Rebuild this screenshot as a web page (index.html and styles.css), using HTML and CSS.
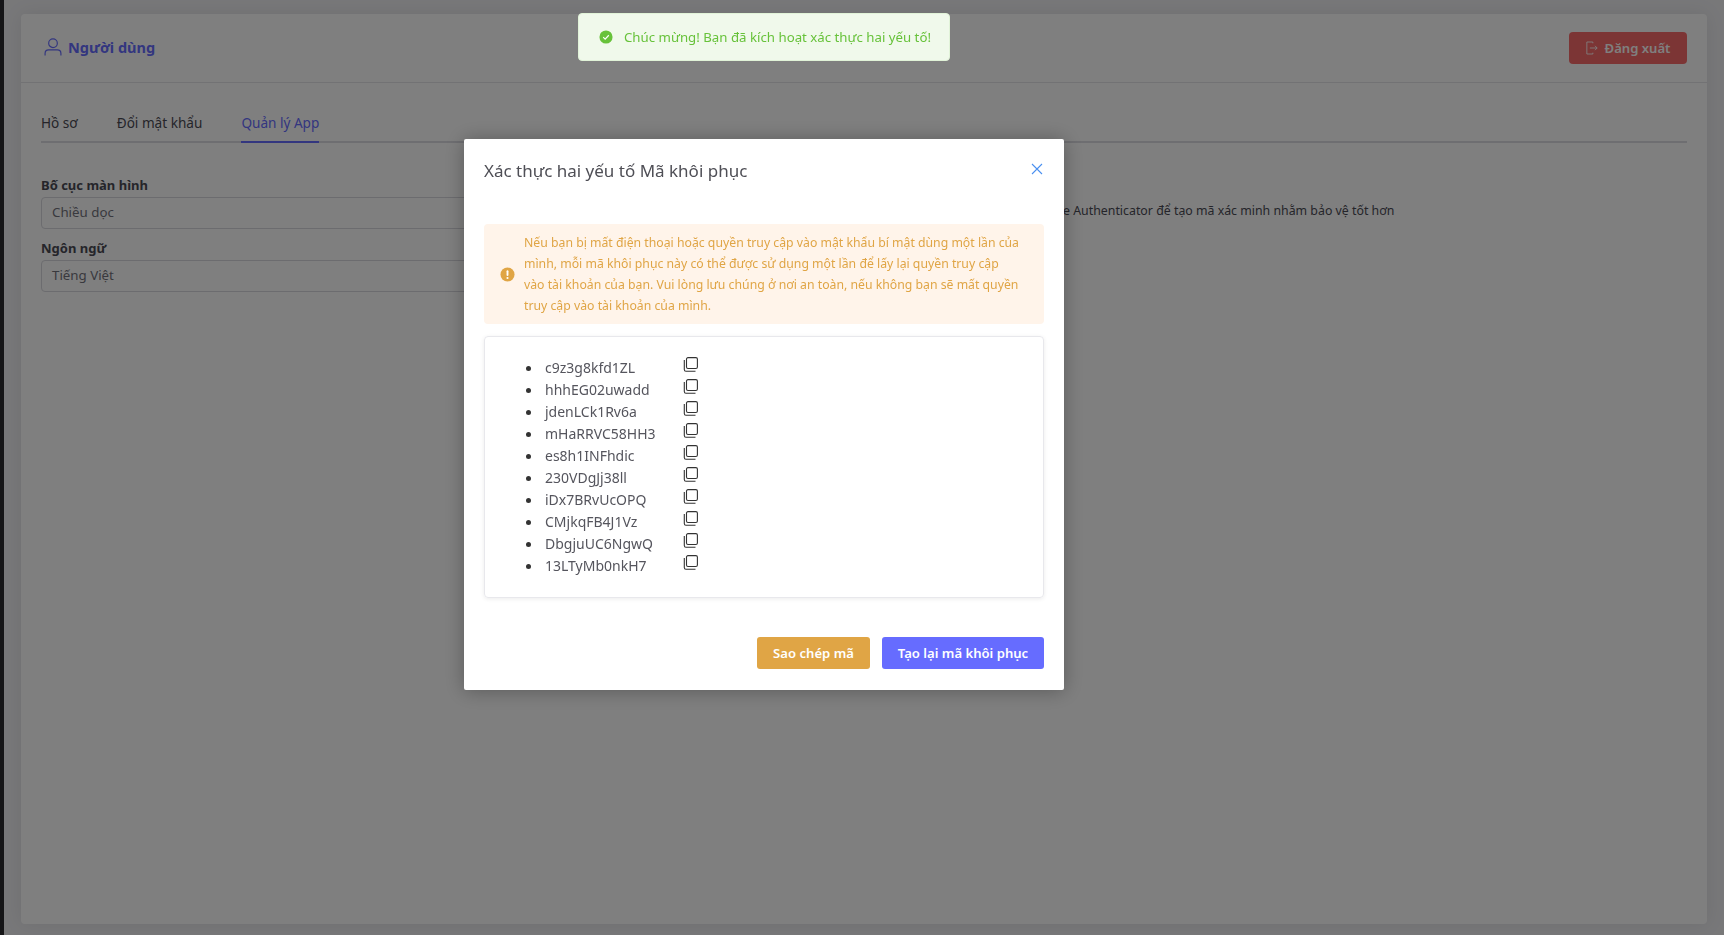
FILE: index.html
```html
<!DOCTYPE html>
<html>
    <head>
        <title>Người dùng</title>
        <link rel="stylesheet" href="styles.css">
    </head>
    <body class="body">
        <div class="rail"></div>
        <div class="page">
            <div class="card">
                <div class="card-head">
                    <div class="head-title">
                        <svg class="user-icon" viewBox="0 0 20 20" fill="none" stroke="currentColor" stroke-width="1.300"><circle cx="10" cy="5.800" r="4.800"/><path d="M1.200 19.500v-2.300c0-2.400 1.700-4 4-4h9.600c2.300 0 4 1.600 4 4v2.300"/></svg>
                        <span>Người dùng</span>
                    </div>
                    <button class="logout">
                        <svg class="logout-icon" viewBox="0 0 14 16" fill="none" stroke="currentColor" stroke-width="1"><path d="M8 2.500V1H1v14h7v-1.500"/><path d="M4.500 8h8.500M10.500 5.500L13 8l-2.500 2.500"/></svg>
                        Đăng xuất
                    </button>
                </div>
                <div class="card-body">
                    <div class="tabs">
                        <div class="tab">Hồ sơ</div>
                        <div class="tab">Đổi mật khẩu</div>
                        <div class="tab active">Quản lý App</div>
                    </div>
                    <div class="cols">
                        <div class="form">
                            <label class="label">Bố cục màn hình</label>
                            <div class="input">Chiều dọc</div>
                            <label class="label">Ngôn ngữ</label>
                            <div class="input">Tiếng Việt</div>
                        </div>
                        <div class="side">Sử dụng ứng dụng Google Authenticator để tạo mã xác minh nhằm bảo vệ tốt hơn</div>
                    </div>
                </div>
            </div>
        </div>

        <div class="overlay">
            <div class="modal">
                <div class="modal-head">
                    <span class="modal-title">Xác thực hai yếu tố Mã khôi phục</span>
                    <svg class="close" viewBox="0 0 12 12" fill="none" stroke="currentColor" stroke-width="1.100"><path d="M1 1l10 10M11 1L1 11"/></svg>
                </div>
                <div class="alert">
                    <svg class="alert-icon" viewBox="0 0 16 16"><circle cx="8" cy="8" r="7.500" fill="#e0a545"/><rect x="7" y="3.500" width="2" height="6" rx="1" fill="#fff"/><circle cx="8" cy="11.700" r="1.150" fill="#fff"/></svg>
                    <p class="alert-text">Nếu bạn bị mất điện thoại hoặc quyền truy cập vào mật khẩu bí mật dùng một lần của mình, mỗi mã khôi phục này có thể được sử dụng một lần để lấy lại quyền truy cập vào tài khoản của bạn. Vui lòng lưu chúng ở nơi an toàn, nếu không bạn sẽ mất quyền truy cập vào tài khoản của mình.</p>
                </div>
                <div class="codes">
                    <ul class="code-list">
                        <li class="code"><span class="code-text">c9z3g8kfd1ZL</span><svg class="copy" viewBox="0 0 15 15" fill="none" stroke="currentColor" stroke-width="1.100"><rect x="3.500" y="0.600" width="10.900" height="10.900" rx="1.500"/><path d="M1.300 3v9.500c0 1 .7 1.800 1.700 1.800h9.500"/></svg></li>
                        <li class="code"><span class="code-text">hhhEG02uwadd</span><svg class="copy" viewBox="0 0 15 15" fill="none" stroke="currentColor" stroke-width="1.100"><rect x="3.500" y="0.600" width="10.900" height="10.900" rx="1.500"/><path d="M1.300 3v9.500c0 1 .7 1.800 1.700 1.800h9.500"/></svg></li>
                        <li class="code"><span class="code-text">jdenLCk1Rv6a</span><svg class="copy" viewBox="0 0 15 15" fill="none" stroke="currentColor" stroke-width="1.100"><rect x="3.500" y="0.600" width="10.900" height="10.900" rx="1.500"/><path d="M1.300 3v9.500c0 1 .7 1.800 1.700 1.800h9.500"/></svg></li>
                        <li class="code"><span class="code-text">mHaRRVC58HH3</span><svg class="copy" viewBox="0 0 15 15" fill="none" stroke="currentColor" stroke-width="1.100"><rect x="3.500" y="0.600" width="10.900" height="10.900" rx="1.500"/><path d="M1.300 3v9.500c0 1 .7 1.800 1.700 1.800h9.500"/></svg></li>
                        <li class="code"><span class="code-text">es8h1INFhdic</span><svg class="copy" viewBox="0 0 15 15" fill="none" stroke="currentColor" stroke-width="1.100"><rect x="3.500" y="0.600" width="10.900" height="10.900" rx="1.500"/><path d="M1.300 3v9.500c0 1 .7 1.800 1.700 1.800h9.500"/></svg></li>
                        <li class="code"><span class="code-text">230VDgJj38ll</span><svg class="copy" viewBox="0 0 15 15" fill="none" stroke="currentColor" stroke-width="1.100"><rect x="3.500" y="0.600" width="10.900" height="10.900" rx="1.500"/><path d="M1.300 3v9.500c0 1 .7 1.800 1.700 1.800h9.500"/></svg></li>
                        <li class="code"><span class="code-text">iDx7BRvUcOPQ</span><svg class="copy" viewBox="0 0 15 15" fill="none" stroke="currentColor" stroke-width="1.100"><rect x="3.500" y="0.600" width="10.900" height="10.900" rx="1.500"/><path d="M1.300 3v9.500c0 1 .7 1.800 1.700 1.800h9.500"/></svg></li>
                        <li class="code"><span class="code-text">CMjkqFB4J1Vz</span><svg class="copy" viewBox="0 0 15 15" fill="none" stroke="currentColor" stroke-width="1.100"><rect x="3.500" y="0.600" width="10.900" height="10.900" rx="1.500"/><path d="M1.300 3v9.500c0 1 .7 1.800 1.700 1.800h9.500"/></svg></li>
                        <li class="code"><span class="code-text">DbgjuUC6NgwQ</span><svg class="copy" viewBox="0 0 15 15" fill="none" stroke="currentColor" stroke-width="1.100"><rect x="3.500" y="0.600" width="10.900" height="10.900" rx="1.500"/><path d="M1.300 3v9.500c0 1 .7 1.800 1.700 1.800h9.500"/></svg></li>
                        <li class="code"><span class="code-text">13LTyMb0nkH7</span><svg class="copy" viewBox="0 0 15 15" fill="none" stroke="currentColor" stroke-width="1.100"><rect x="3.500" y="0.600" width="10.900" height="10.900" rx="1.500"/><path d="M1.300 3v9.500c0 1 .7 1.800 1.700 1.800h9.500"/></svg></li>
                    </ul>
                </div>
                <div class="modal-foot">
                    <button class="btn btn-amber">Sao chép mã</button>
                    <button class="btn btn-blue">Tạo lại mã khôi phục</button>
                </div>
            </div>
        </div>

        <div class="toast">
            <svg class="toast-icon" viewBox="0 0 16 16"><circle cx="8" cy="8" r="7.500" fill="#67c23a"/><path d="M4.800 8.200l2.200 2.200 4.200-4.400" fill="none" stroke="#fff" stroke-width="1.300"/></svg>
            <span>Chúc mừng! Bạn đã kích hoạt xác thực hai yếu tố!</span>
        </div>
    </body>
</html>
```

FILE: styles.css
```css
.body{
    margin: 0;
    display: flex;
    height: 935px;
    overflow: hidden;
    font-family: "Noto Sans", "Open Sans", sans-serif;
    font-size: 13.3px;
    color: #4b4b55;
    background-color: #f0f0f3;
}
.rail{
    width: 4px;
    background-color: #2a2a2e;
}
.page{
    flex: 1;
    padding: 14px 17px 11px 17px;
    display: flex;
}
.card{
    flex: 1;
    background-color: #fff;
    border-radius: 4px;
    box-shadow: 0 0 20px rgba(0,0,0,0.08);
}
.card-head{
    height: 68px;
    padding: 0 20px 0 23px;
    border-bottom: 1px solid #e4e4e8;
    display: flex;
    align-items: center;
    justify-content: space-between;
}
.head-title{
    display: flex;
    align-items: center;
    gap: 6px;
    padding-bottom: 2px;
    color: #666cff;
    font-size: 14.500px;
    font-weight: 700;
}
.user-icon{
    width: 18px;
    height: 20px;
}
.logout{
    width: 118px;
    height: 32px;
    margin-top: -1px;
    border: 0;
    border-radius: 4px;
    background-color: #f96b6b;
    color: #fff;
    font-family: inherit;
    font-size: 13.100px;
    font-weight: 600;
    display: flex;
    align-items: center;
    justify-content: center;
    gap: 7px;
}
.logout-icon{
    width: 12px;
    height: 14px;
}
.card-body{
    padding: 23px 20px 0 20px;
}
.tabs{
    display: flex;
    gap: 39px;
    border-bottom: 2px solid #dcdce2;
    height: 35px;
    font-size: 13.600px;
}
.tab{
    height: 35px;
    line-height: 33px;
    color: #4b4b55;
}
.active{
    color: #666cff;
    border-bottom: 2px solid #666cff;
}
.cols{
    display: grid;
    grid-template-columns: 1fr 1fr;
    padding-top: 33px;
}
.form{
    padding-right: 10px;
}
.label{
    display: block;
    height: 21px;
    line-height: 19px;
    font-size: 13px;
    font-weight: 700;
}
.input{
    height: 32px;
    line-height: 29px;
    padding-left: 10px;
    border: 1px solid #d8d8de;
    border-radius: 4px;
    margin-bottom: 10px;
    color: #73737d;
    box-sizing: border-box;
}
.side{
    padding-top: 26px;
    padding-left: 52px;
    font-size: 12.350px;
    white-space: nowrap;
}
.overlay{
    position: fixed;
    inset: 0;
    background-color: rgba(0,0,0,0.5);
    display: flex;
    align-items: flex-start;
    padding-top: 139px;
    padding-left: 464px;
    box-sizing: border-box;
}
.modal{
    width: 600px;
    height: 551px;
    box-sizing: border-box;
    padding: 0 20px;
    background-color: #fff;
    border-radius: 2px;
    box-shadow: 0 1px 20px rgba(0,0,0,0.3);
}
.modal-head{
    height: 85px;
    display: flex;
    justify-content: space-between;
    padding-top: 20px;
    box-sizing: border-box;
}
.modal-title{
    font-size: 17px;
    line-height: 24px;
    color: #4f4f56;
}
.close{
    width: 12px;
    height: 12px;
    margin-top: 4px;
    margin-right: 1px;
    color: #4a90f0;
}
.alert{
    height: 100px;
    box-sizing: border-box;
    background-color: #fff4ea;
    border-radius: 4px;
    display: flex;
    align-items: center;
    padding-left: 16px;
    gap: 9px;
}
.alert-icon{
    width: 15px;
    height: 15px;
    flex: none;
}
.alert-text{
    margin: 0;
    width: 497px;
    font-size: 12.250px;
    line-height: 21px;
    color: #e0a545;
}
.codes{
    height: 262px;
    margin-top: 12px;
    box-sizing: border-box;
    border: 1px solid #e8e8ec;
    border-radius: 4px;
    box-shadow: 0 1px 4px rgba(0,0,0,0.08);
    padding: 20px 0 0 41px;
}
.code-list{
    margin: 0;
    padding: 0;
    list-style: none;
    color: #55555d;
}
.code{
    height: 22px;
    line-height: 22px;
    font-size: 14px;
    display: flex;
    align-items: flex-start;
}
.code::before{
    content: "";
    width: 5px;
    height: 5px;
    margin: 9px 14px 0 0;
    border-radius: 50%;
    background-color: #333;
}
.code-text{
    width: 138px;
}
.copy{
    width: 15px;
    height: 15px;
    color: #333;
}
.modal-foot{
    margin-top: 39px;
    display: flex;
    justify-content: flex-end;
    gap: 12px;
}
.btn{
    height: 32px;
    border: 0;
    border-radius: 3px;
    color: #fff;
    font-family: inherit;
    font-size: 13.100px;
    font-weight: 600;
}
.btn-amber{
    width: 113px;
    background-color: #e0a545;
}
.btn-blue{
    width: 162px;
    background-color: #666cff;
}
.toast{
    position: fixed;
    top: 13px;
    left: 578px;
    width: 372px;
    height: 48px;
    box-sizing: border-box;
    background-color: #f0f9eb;
    border: 1px solid #e1f3d8;
    border-radius: 4px;
    display: flex;
    align-items: center;
    padding-left: 20px;
    gap: 11px;
    color: #67c23a;
    font-size: 13.250px;
    white-space: nowrap;
}
.toast-icon{
    width: 14px;
    height: 14px;
}
```
